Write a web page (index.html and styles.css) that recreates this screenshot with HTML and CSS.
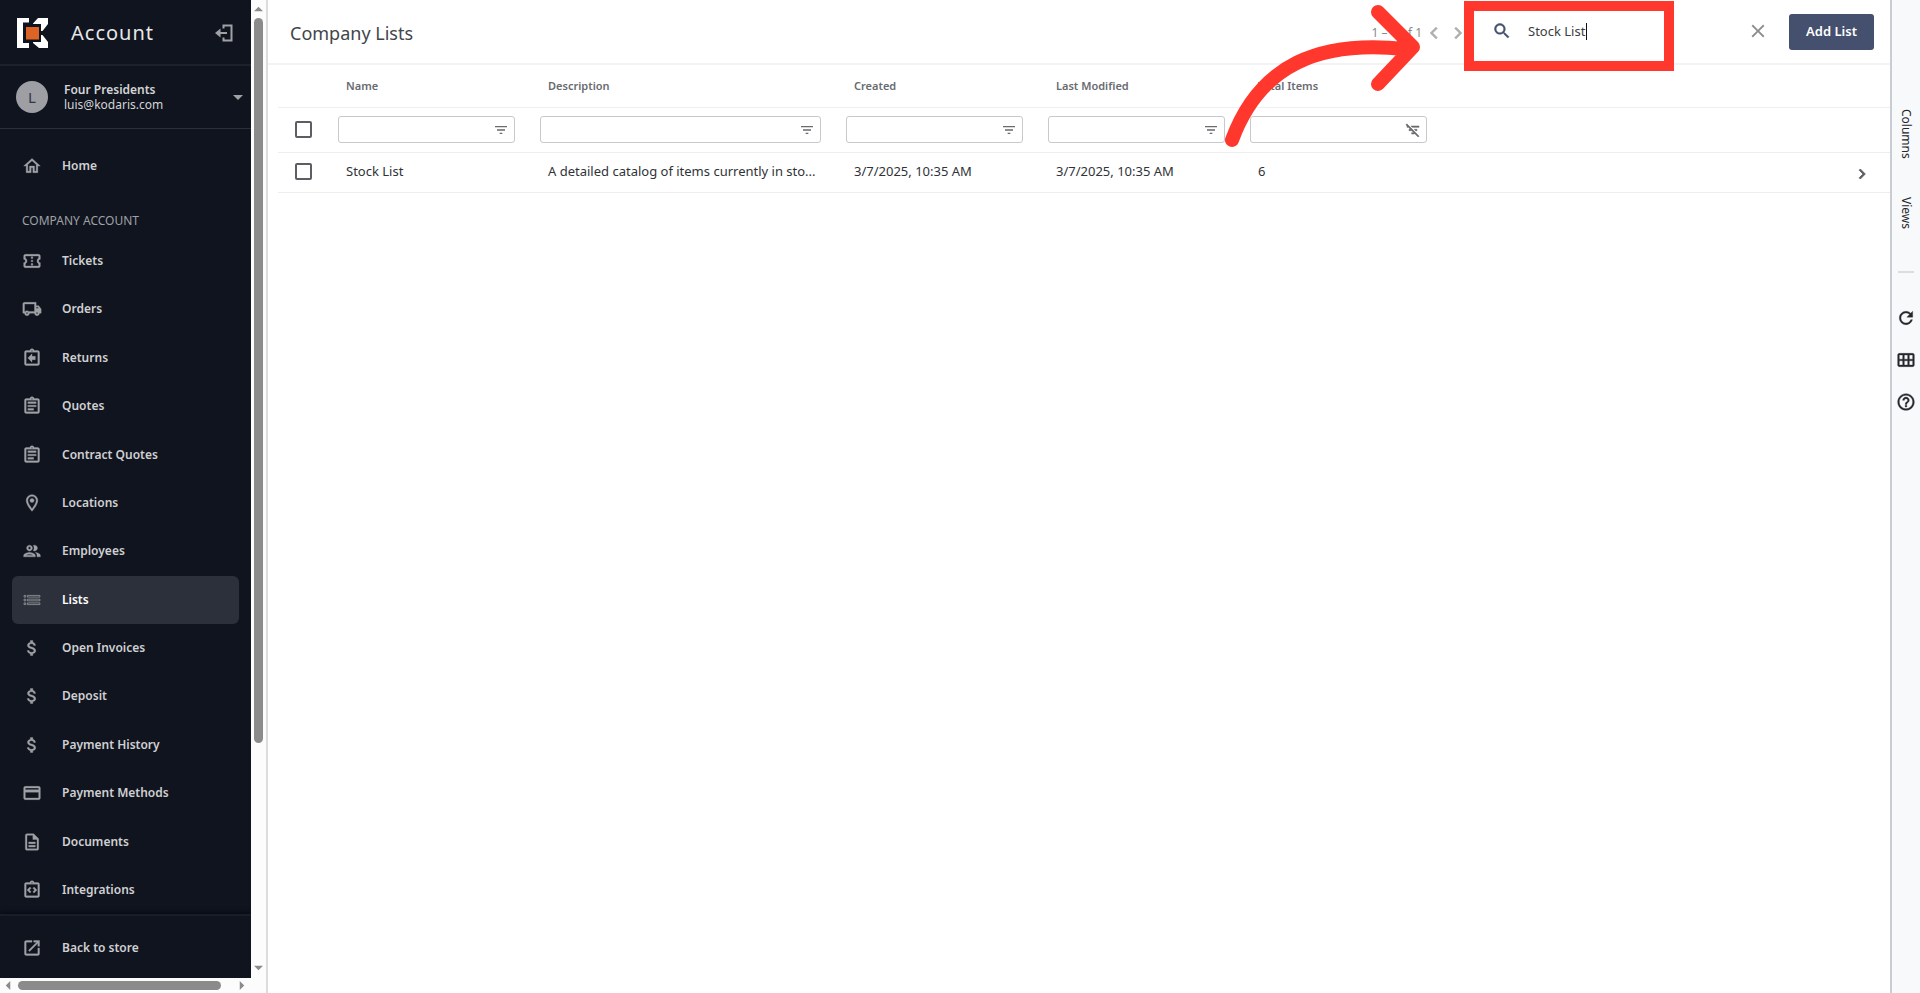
FILE: index.html
```html
<!DOCTYPE html>
<html lang="en">
<head>
<meta charset="utf-8">
<title>Company Lists</title>
<link rel="stylesheet" href="styles.css">
</head>
<body>
<svg class="defs" aria-hidden="true">
  <symbol id="home" viewBox="0 0 24 24"><path d="M12 5.69l5 4.5V18h-2v-6H9v6H7v-7.81l5-4.5M12 3L2 12h3v8h6v-6h2v6h6v-8h3L12 3z"/></symbol>
  <symbol id="ticket" viewBox="0 0 24 24"><path d="M22 10V6c0-1.110-.9-2-2-2H4c-1.100 0-1.990.89-1.990 2v4c1.100 0 1.990.9 1.990 2s-.89 2-2 2v4c0 1.100.9 2 2 2h16c1.100 0 2-.9 2-2v-4c-1.100 0-2-.9-2-2s.9-2 2-2zm-2-1.460c-1.190.69-2 1.990-2 3.460s.81 2.770 2 3.460V18H4v-2.540c1.190-.69 2-1.990 2-3.460 0-1.480-.8-2.770-1.990-3.460L4 6h16v2.540zM11 15h2v2h-2zm0-4h2v2h-2zm0-4h2v2h-2z"/></symbol>
  <symbol id="truck" viewBox="0 0 24 24"><path d="M20 8h-3V4H3c-1.100 0-2 .9-2 2v11h2c0 1.660 1.340 3 3 3s3-1.340 3-3h6c0 1.660 1.340 3 3 3s3-1.340 3-3h2v-5l-3-4zm-1 1.500l1 1.500H17V9.500zM6 18c-.55 0-1-.45-1-1s.45-1 1-1 1 .45 1 1-.45 1-1 1zm2.220-3c-.55-.61-1.330-1-2.220-1s-1.670.39-2.220 1H3V6h12v9H8.220zM18 18c-.55 0-1-.45-1-1s.45-1 1-1 1 .45 1 1-.45 1-1 1z"/></symbol>
  <symbol id="returns" viewBox="0 0 24 24"><path d="M16 10h-4V7l-5 5 5 5v-3h4zM19 3h-4.180C14.400 1.840 13.300 1 12 1s-2.400.84-2.820 2H5c-1.100 0-2 .9-2 2v14c0 1.100.9 2 2 2h14c1.100 0 2-.9 2-2V5c0-1.100-.9-2-2-2zm-7-.25c.41 0 .75.34.75.75s-.34.75-.75.75-.75-.34-.75-.75.34-.75.75-.75zM19 19H5V5h14v14z"/></symbol>
  <symbol id="quote" viewBox="0 0 24 24"><path d="M7 15h7v2H7zm0-4h10v2H7zm0-4h10v2H7zM19 3h-4.180C14.400 1.840 13.300 1 12 1s-2.400.84-2.820 2H5c-1.100 0-2 .9-2 2v14c0 1.100.9 2 2 2h14c1.100 0 2-.9 2-2V5c0-1.100-.9-2-2-2zm-7-.25c.41 0 .75.34.75.75s-.34.75-.75.75-.75-.34-.75-.75.34-.75.75-.75zM19 19H5V5h14v14z"/></symbol>
  <symbol id="pin" viewBox="0 0 24 24"><path d="M12 2C8.130 2 5 5.130 5 9c0 5.250 7 13 7 13s7-7.750 7-13c0-3.870-3.130-7-7-7zM7 9c0-2.760 2.240-5 5-5s5 2.240 5 5c0 2.880-2.880 7.190-5 9.880C9.920 16.210 7 11.850 7 9z"/><circle cx="12" cy="9" r="2.500"/></symbol>
  <symbol id="people" viewBox="0 0 24 24"><path d="M9 13.750c-2.340 0-7 1.170-7 3.500V19h14v-1.750c0-2.330-4.660-3.500-7-3.500zM4.340 17c.84-.58 2.870-1.250 4.660-1.250s3.820.67 4.660 1.250H4.340zM9 12c1.930 0 3.500-1.570 3.500-3.500S10.930 5 9 5 5.500 6.570 5.500 8.500 7.070 12 9 12zm0-5c.83 0 1.500.67 1.500 1.500S9.830 10 9 10s-1.500-.67-1.500-1.500S8.170 7 9 7zm7.040 6.810c1.160.84 1.960 1.960 1.960 3.440V19h4v-1.750c0-2.020-3.500-3.170-5.960-3.440zM15 12c1.930 0 3.500-1.570 3.500-3.500S16.930 5 15 5c-.54 0-1.040.13-1.500.35.63.89 1 1.980 1 3.150s-.37 2.260-1 3.150c.46.22.96.35 1.500.35z"/></symbol>
  <symbol id="lists" viewBox="0 0 24 24"><path fill="none" stroke="currentColor" stroke-width=".9" d="M2.500 6.500h2v2h-2zM6.500 6.500h15v2h-15zM2.500 11h2v2h-2zM6.500 11h15v2h-15zM2.500 15.500h2v2h-2zM6.500 15.500h15v2h-15z"/></symbol>
  <symbol id="dollar" viewBox="0 0 24 24"><path d="M11.800 10.900c-2.270-.59-3-1.200-3-2.150 0-1.090 1.010-1.850 2.700-1.850 1.780 0 2.440.85 2.500 2.100h2.210c-.07-1.720-1.120-3.300-3.210-3.810V3h-3v2.160c-1.940.42-3.500 1.680-3.500 3.610 0 2.310 1.910 3.460 4.700 4.130 2.500.6 3 1.480 3 2.410 0 .69-.49 1.790-2.700 1.790-2.060 0-2.870-.92-2.980-2.100h-2.200c.12 2.190 1.760 3.420 3.680 3.830V21h3v-2.150c1.950-.37 3.500-1.500 3.500-3.550 0-2.840-2.430-3.810-4.700-4.400z"/></symbol>
  <symbol id="card" viewBox="0 0 24 24"><path d="M20 4H4c-1.110 0-1.990.89-1.990 2L2 18c0 1.110.89 2 2 2h16c1.110 0 2-.89 2-2V6c0-1.110-.89-2-2-2zm0 14H4v-7h16v7zm0-10H4V6h16v2z"/></symbol>
  <symbol id="doc" viewBox="0 0 24 24"><path d="M8 16h8v2H8zm0-4h8v2H8zm6-10H6c-1.100 0-2 .9-2 2v16c0 1.100.89 2 1.990 2H18c1.100 0 2-.9 2-2V8l-6-6zm4 18H6V4h7v5h5v11z"/></symbol>
  <symbol id="code" viewBox="0 0 24 24"><path d="M11 14.170L8.830 12 11 9.830 9.590 8.410 6 12l3.590 3.590zm3.410 1.420L18 12l-3.590-3.590L13 9.830 15.170 12 13 14.170zM19 3h-4.180C14.400 1.840 13.300 1 12 1s-2.400.84-2.820 2H5c-1.100 0-2 .9-2 2v14c0 1.100.9 2 2 2h14c1.100 0 2-.9 2-2V5c0-1.100-.9-2-2-2zm-7-.25c.41 0 .75.34.75.75s-.34.75-.75.75-.75-.34-.75-.75.34-.75.75-.75zM19 19H5V5h14v14z"/></symbol>
  <symbol id="open" viewBox="0 0 24 24"><path d="M19 19H5V5h7V3H5c-1.110 0-2 .9-2 2v14c0 1.100.89 2 2 2h14c1.100 0 2-.9 2-2v-7h-2v7zM14 3v2h3.590l-9.830 9.830 1.410 1.410L19 6.410V10h2V3h-7z"/></symbol>
  <symbol id="filter" viewBox="0 0 24 24"><path d="M10 18h4v-2h-4v2zM3 6v2h18V6H3zm3 7h12v-2H6v2z"/></symbol>
  <symbol id="filter-off" viewBox="0 0 24 24"><path d="M10.830 8H21V6H8.830l2 2zm5 5H18v-2h-4.170l2 2zM14 16.830V18h-4v-2h3.170l-3-3H6v-2h2.170l-3-3H3V6h.17L1.390 4.220 2.800 2.810l18.380 18.380-1.410 1.410L14 16.830z"/></symbol>
  <symbol id="search" viewBox="0 0 24 24"><path d="M15.500 14h-.79l-.28-.27C15.410 12.590 16 11.110 16 9.500 16 5.910 13.090 3 9.500 3S3 5.910 3 9.500 5.910 16 9.500 16c1.610 0 3.090-.59 4.230-1.570l.27.28v.79l5 4.990L20.490 19l-4.990-5zm-6 0C7.010 14 5 11.990 5 9.500S7.010 5 9.500 5 14 7.010 14 9.500 11.990 14 9.500 14z"/></symbol>
  <symbol id="close" viewBox="0 0 24 24"><path d="M19 6.410L17.590 5 12 10.590 6.410 5 5 6.410 10.590 12 5 17.590 6.410 19 12 13.410 17.590 19 19 17.590 13.410 12z"/></symbol>
  <symbol id="left" viewBox="0 0 24 24"><path d="M15.410 7.410L14 6l-6 6 6 6 1.410-1.410L10.830 12z"/></symbol>
  <symbol id="right" viewBox="0 0 24 24"><path d="M10 6L8.590 7.410 13.170 12l-4.580 4.590L10 18l6-6z"/></symbol>
  <symbol id="refresh" viewBox="0 0 24 24"><path d="M17.650 6.350C16.200 4.900 14.210 4 12 4c-4.420 0-7.990 3.580-7.990 8s3.570 8 7.990 8c3.730 0 6.840-2.550 7.730-6h-2.080c-.82 2.330-3.040 4-5.650 4-3.310 0-6-2.690-6-6s2.690-6 6-6c1.660 0 3.140.69 4.220 1.780L13 11h7V4l-2.350 2.350z"/></symbol>
  <symbol id="grid" viewBox="0 0 24 24"><path d="M20 4H4c-1.100 0-2 .9-2 2v12c0 1.100.9 2 2 2h16c1.100 0 2-.9 2-2V6c0-1.100-.9-2-2-2zM8 11H4V6h4v5zm6 0h-4V6h4v5zm6 0h-4V6h4v5zM8 18H4v-5h4v5zm6 0h-4v-5h4v5zm6 0h-4v-5h4v5z"/></symbol>
  <symbol id="help" viewBox="0 0 24 24"><path d="M11 18h2v-2h-2v2zm1-16C6.480 2 2 6.480 2 12s4.480 10 10 10 10-4.480 10-10S17.520 2 12 2zm0 18c-4.410 0-8-3.590-8-8s3.590-8 8-8 8 3.590 8 8-3.590 8-8 8zm0-14c-2.210 0-4 1.790-4 4h2c0-1.100.9-2 2-2s2 .9 2 2c0 2-3 1.750-3 5h2c0-2.250 3-2.500 3-5 0-2.210-1.790-4-4-4z"/></symbol>
  <symbol id="exit" viewBox="0 0 18 18"><path fill="none" stroke="currentColor" stroke-width="2" d="M8.500 4.500V1.500H16.500V16.500H8.500V13.500M12 9H3"/><path d="M5.500 4.500L0 9l5.500 4.500z"/></symbol>
</svg>
<div class="app">
  <aside class="side">
    <div class="panel">
      <header class="brand">
        <svg class="logo" viewBox="0 0 31 30" aria-label="Kodaris"><path fill="#fff" d="M0 0H12V4.500H6V25H12V30H0zM16 5.500L21 0H31V6L25.500 13H24V6H16zM16 24H24V17H25.500L31 24V30H22L16 25z"/><path fill="#dd6425" d="M9 9h13v12.500H9z"/></svg>
        <h1>Account</h1>
        <button class="plain exit" aria-label="Collapse"><svg class="i18"><use href="#exit"/></svg></button>
      </header>
      <button class="plain user">
        <span class="avatar">L</span>
        <span class="who"><b>Four Presidents</b><span>luis@kodaris.com</span></span>
        <svg class="caret" viewBox="0 0 10 5"><path d="M0 0h10L5 5z"/></svg>
      </button>
      <nav class="nav">
        <a class="item home" href="#"><svg class="i20"><use href="#home"/></svg>Home</a>
        <h2>COMPANY ACCOUNT</h2>
        <div class="items">
          <a class="item" href="#"><svg class="i20"><use href="#ticket"/></svg>Tickets</a>
          <a class="item" href="#"><svg class="i20"><use href="#truck"/></svg>Orders</a>
          <a class="item" href="#"><svg class="i20"><use href="#returns"/></svg>Returns</a>
          <a class="item" href="#"><svg class="i20"><use href="#quote"/></svg>Quotes</a>
          <a class="item" href="#"><svg class="i20"><use href="#quote"/></svg>Contract Quotes</a>
          <a class="item" href="#"><svg class="i20"><use href="#pin"/></svg>Locations</a>
          <a class="item" href="#"><svg class="i20"><use href="#people"/></svg>Employees</a>
          <a class="item active" href="#"><svg class="i20"><use href="#lists"/></svg>Lists</a>
          <a class="item" href="#"><svg class="i20"><use href="#dollar"/></svg>Open Invoices</a>
          <a class="item" href="#"><svg class="i20"><use href="#dollar"/></svg>Deposit</a>
          <a class="item" href="#"><svg class="i20"><use href="#dollar"/></svg>Payment History</a>
          <a class="item" href="#"><svg class="i20"><use href="#card"/></svg>Payment Methods</a>
          <a class="item" href="#"><svg class="i20"><use href="#doc"/></svg>Documents</a>
          <a class="item" href="#"><svg class="i20"><use href="#code"/></svg>Integrations</a>
        </div>
      </nav>
      <footer class="foot"><a class="item" href="#"><svg class="i20"><use href="#open"/></svg>Back to store</a></footer>
    </div>
    <div class="vbar">
      <svg viewBox="0 0 10 6"><path d="M0 5.500L5 .5l5 5z"/></svg>
      <div class="track"><div class="thumb"></div></div>
      <svg viewBox="0 0 10 6"><path d="M0 .5h10l-5 5z"/></svg>
    </div>
    <div class="hbar">
      <svg viewBox="0 0 6 10"><path d="M5.500 0v10L.5 5z"/></svg>
      <div class="track"><div class="thumb"></div></div>
      <svg viewBox="0 0 6 10"><path d="M.5 0v10l5-5z"/></svg>
    </div>
  </aside>

  <main class="main">
    <header class="top">
      <h2 class="title">Company Lists</h2>
      <div class="pager">
        <span>1 – 1 of 1</span>
        <button class="plain" aria-label="Previous"><svg class="i24"><use href="#left"/></svg></button>
        <button class="plain" aria-label="Next"><svg class="i24"><use href="#right"/></svg></button>
      </div>
      <div class="searchbox">
        <svg class="i20"><use href="#search"/></svg>
        <input type="text" aria-label="Search" value="Stock List">
        <button class="plain clear" aria-label="Clear"><svg class="i22"><use href="#close"/></svg></button>
      </div>
      <button class="add">Add List</button>
      <div class="frame"><i class="cursor"></i></div>
      <svg class="arrow" viewBox="0 0 200 156"><path d="M10 140C38 64 98 40 183 49M156 12L191 47L156 84"/></svg>
    </header>
    <table class="grid">
      <colgroup><col class="c-check"><col class="c-mid"><col class="c-desc"><col class="c-mid"><col class="c-mid"><col class="c-mid"><col><col class="c-go"></colgroup>
      <thead>
        <tr class="heads"><th></th><th>Name</th><th>Description</th><th>Created</th><th>Last Modified</th><th>Total Items</th><th></th><th></th></tr>
        <tr class="filters">
          <td class="check"><input type="checkbox" aria-label="Select all"></td>
          <td><label class="filter"><input type="text" aria-label="Filter name"><svg class="i16"><use href="#filter"/></svg></label></td>
          <td><label class="filter"><input type="text" aria-label="Filter description"><svg class="i16"><use href="#filter"/></svg></label></td>
          <td><label class="filter"><input type="text" aria-label="Filter created"><svg class="i16"><use href="#filter"/></svg></label></td>
          <td><label class="filter"><input type="text" aria-label="Filter last modified"><svg class="i16"><use href="#filter"/></svg></label></td>
          <td><label class="filter off"><input type="text" aria-label="Filter total items"><svg class="i16"><use href="#filter-off"/></svg></label></td>
          <td></td><td></td>
        </tr>
      </thead>
      <tbody>
        <tr class="row">
          <td class="check"><input type="checkbox" aria-label="Select Stock List"></td>
          <td>Stock List</td><td>A detailed catalog of items currently in sto...</td><td>3/7/2025, 10:35 AM</td><td>3/7/2025, 10:35 AM</td><td>6</td><td></td>
          <td class="go"><button class="plain" aria-label="Open"><svg class="i20"><use href="#right"/></svg></button></td>
        </tr>
      </tbody>
    </table>
  </main>

  <aside class="rail">
    <button class="plain vert">Columns</button>
    <button class="plain vert">Views</button>
    <hr>
    <button class="plain tool" aria-label="Refresh"><svg class="i20"><use href="#refresh"/></svg></button>
    <button class="plain tool" aria-label="Grid"><svg class="i20"><use href="#grid"/></svg></button>
    <button class="plain tool" aria-label="Help"><svg class="i20"><use href="#help"/></svg></button>
  </aside>
</div>
</body>
</html>
```

FILE: styles.css
```css
* { box-sizing: border-box; }
body { margin: 0; font: 13px/16px "Noto Sans", "Open Sans", sans-serif; color: #2f3338; background: #fff; }
h1, h2 { margin: 0; font-weight: 400; }
svg { fill: currentColor; flex: none; display: block; }
.defs { display: none; }
.plain { border: 0; padding: 0; margin: 0; background: none; font: inherit; color: inherit; display: flex; cursor: pointer; }
.i16 { width: 16px; height: 16px; }
.i18 { width: 18px; height: 18px; }
.i20 { width: 20px; height: 20px; }
.i22 { width: 22px; height: 22px; }
.i24 { width: 24px; height: 24px; }

.app { display: flex; min-height: 100vh; }

/* Sidebar */
.side { flex: none; width: 268px; display: grid; grid-template: 1fr 15px / 251px 15px; background: #fcfcfc; border-right: 2px solid #dcdcdc; }
.panel { background: #10141f; color: #9fa1a5; display: flex; flex-direction: column; }
.brand { display: flex; align-items: center; height: 66px; padding: 2px 18px 0 17px; border-bottom: 2px solid #1d212b; }
.logo { width: 31px; height: 30px; }
.brand h1 { flex: 1; margin-left: 23px; font-size: 20px; line-height: 28px; color: #e6e7e8; letter-spacing: 1px; }
.user { height: 63px; align-items: center; padding: 0 8px 0 16px; border-bottom: 1px solid #2b2f39; text-align: left; }
.avatar { width: 32px; height: 32px; border-radius: 50%; background: #9d9fa4; color: #33363f; font-size: 15px; line-height: 32px; text-align: center; }
.who { flex: 1; margin-left: 16px; font-size: 12px; line-height: 15px; color: #d3d4d6; }
.who b, .who span { display: block; font-weight: 600; }
.who span { font-weight: 400; }
.caret { width: 10px; height: 5px; }
.nav { flex: 1; display: flex; flex-direction: column; padding: 13px 12px 0; }
.nav h2 { padding: 23px 10px 8px; font-size: 12px; line-height: 16px; }
.items { flex: 1; display: flex; flex-direction: column; justify-content: space-between; }
.item { display: flex; align-items: center; gap: 20px; height: 48px; padding: 0 10px; border-radius: 6px; color: #cfd0d2; font-size: 12px; font-weight: 600; text-decoration: none; }
.item svg { color: #9fa1a5; stroke: currentColor; stroke-width: .4px; }
.item.active { background: #2c303a; color: #fff; }
.foot { height: 64px; padding: 8px 12px; border-top: 2px solid #1a1d28; box-shadow: 0 -2px 4px #080b13; clip-path: inset(-8px 0 0 0); }
.vbar, .hbar { display: flex; align-items: center; color: #8b8b8b; }
.vbar { flex-direction: column; padding: 6px 0 7px; }
.vbar svg { width: 9px; height: 6px; }
.hbar svg { width: 6px; height: 9px; }
.hbar { padding: 0 6px 0 5px; }
.track { flex: 1; display: flex; }
.vbar .track { padding: 6px 0; }
.vbar .thumb { width: 9px; height: 77%; border-radius: 5px; background: #8b8b8b; }
.hbar .track { padding: 0 7px; }
.hbar .thumb { width: 95%; height: 9px; border-radius: 5px; background: #8b8b8b; }

/* Main area */
.main { flex: 1; min-width: 0; position: relative; }
.top { display: flex; align-items: center; height: 65px; padding: 0 16px 0 22px; border-bottom: 2px solid #f3f3f4; }
.title { flex: 1; padding-top: 2px; font-size: 18px; line-height: 24px; color: #41454a; }
.pager { display: flex; align-items: center; padding-top: 2px; margin-right: 22px; color: #8a8a8a; font-size: 12px; }
.pager svg { color: #b0b0b0; stroke: currentColor; stroke-width: .5px; }
.searchbox { display: flex; align-items: center; width: 277px; margin-right: 20px; padding-bottom: 2px; }
.searchbox > svg { color: #44506e; stroke: currentColor; stroke-width: .5px; }
.searchbox input { flex: 1; min-width: 0; margin: 0; border: 0; padding: 0 16px; font: inherit; color: #3a3d42; outline: 0; background: none; }
.clear { color: #8d8d8d; }
.add { width: 85px; height: 36px; border: 0; border-radius: 3px; background: #44506e; color: #fff; font: inherit; font-weight: 600; padding-bottom: 3px; }
.frame { position: absolute; top: 1px; right: 216px; width: 210px; height: 70px; border: 10px solid #ff372c; pointer-events: none; }
.cursor { position: absolute; top: 12px; left: 112px; width: 1px; height: 17px; background: #111; }
.arrow { position: absolute; top: 0; right: 468px; width: 200px; height: 156px; pointer-events: none; }
.arrow path { fill: none; stroke: #ff372c; stroke-width: 14; stroke-linecap: round; stroke-linejoin: round; }

.grid { width: calc(100% - 10px); margin-left: 10px; table-layout: fixed; border-collapse: collapse; }
.c-check, .c-go { width: 50px; }
.c-mid { width: 202px; }
.c-desc { width: 306px; }
.grid th, .grid td { padding: 0 0 0 18px; text-align: left; white-space: nowrap; border-bottom: 1px solid #eeeeef; }
.grid th { height: 42px; font-size: 11px; font-weight: 600; color: #686b70; }
.filters td { height: 45px; padding: 0 15px 0 10px; }
.grid td.check { padding: 0 0 0 17px; }
.grid .row td { height: 40px; padding-bottom: 2px; }
.check input { appearance: none; display: block; width: 17px; height: 17px; margin: 0; border: 2px solid #5b5e63; border-radius: 2px; background: #fff; }
.filter { display: flex; align-items: center; height: 27px; padding-right: 5px; border: 1px solid #c9c9cb; border-radius: 3px; color: #6a6a6f; }
.filter input { flex: 1; min-width: 0; border: 0; outline: 0; background: none; font: inherit; }
.filter.off svg { stroke: currentColor; stroke-width: .8px; }
.grid .row td.go { padding: 4px 0 0 12px; color: #5c5f64; }
.go svg { stroke: currentColor; stroke-width: 1px; }

/* Tool rail */
.rail { flex: none; width: 30px; display: flex; flex-direction: column; align-items: center; padding-top: 109px; background: #f8f9fb; border-left: 2px solid #c9cdd3; color: #24272c; }
.vert { writing-mode: vertical-rl; font-size: 12px; margin-bottom: 38px; }
.rail hr { width: 16px; height: 2px; margin: 4px 0 35px; border: 0; background: #dcdde0; }
.tool { margin-bottom: 22px; }
.tool svg { width: 20px; height: 20px; stroke: currentColor; stroke-width: .4px; }
```
